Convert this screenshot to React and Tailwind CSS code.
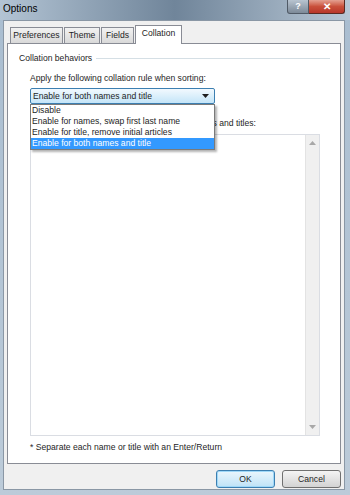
import React from 'react';

const font = { fontFamily: '"Liberation Sans", Arial, sans-serif' };

const tabs = [
  { label: 'Preferences', w: 'w-[53px]' },
  { label: 'Theme', w: 'w-[36px]' },
  { label: 'Fields', w: 'w-[33px]' },
];

const options = [
  'Disable',
  'Enable for names, swap first last name',
  'Enable for title, remove initial articles',
  'Enable for both names and title',
];

const Arrow = ({ up, className }) => (
  <svg width="7" height="4" viewBox="0 0 7 4" className={className}>
    <path d={up ? 'M0 4 L3.5 0 L7 4 Z' : 'M0 0 L7 0 L3.5 4 Z'} fill="currentColor" />
  </svg>
);

const App = () => {
  return (
    <div
      className="w-[350px] h-[495px] flex flex-col bg-gradient-to-b from-[#a9bdd0] to-[#bccbd9] text-[#1e1e1e] overflow-hidden"
      style={font}
    >
      {/* Title bar */}
      <div className="h-[20px] flex items-start justify-between bg-gradient-to-r from-[#b3c4d4] via-[#70859a] to-[#b8c7d5]">
        <span className="pl-[3px] pt-[3px] text-[10px] leading-[12px] text-black">Options</span>
        <div className="flex mr-[5px]">
          <div className="w-[22px] h-[14px] flex items-center justify-center rounded-bl-[3px] border border-t-0 border-[#505a66] bg-gradient-to-b from-[#b8c4d0] to-[#7d8a98] text-white text-[9px] font-bold leading-none">
            ?
          </div>
          <div className="w-[36px] h-[14px] flex items-center justify-center rounded-br-[3px] border border-t-0 border-l-0 border-[#5a2a22] bg-gradient-to-b from-[#e3a091] via-[#c9503b] to-[#b8362a] text-white text-[10px] font-bold leading-none">
            ✕
          </div>
        </div>
      </div>

      {/* Client area */}
      <div className="flex-1 ml-[3px] mr-[5px] mb-[5px] bg-[#f0f0f0] border border-[#8a97a5] flex flex-col">
        {/* Tabs */}
        <div className="flex items-end ml-[6px] mt-[4px] h-[18px]">
          {tabs.map((t) => (
            <div
              key={t.label}
              className={`${t.w} h-[16px] mr-[1px] border border-b-0 border-[#898c95] bg-gradient-to-b from-[#f2f2f2] to-[#d9d9d9] text-[8.6px] leading-[14px] text-center`}
            >
              {t.label}
            </div>
          ))}
          <div className="w-[47px] h-[19px] -mb-px relative z-10 border border-b-0 border-[#898c95] bg-white text-[8.6px] leading-[15px] text-center">
            Collation
          </div>
        </div>

        {/* Panel */}
        <div className="ml-[3px] mr-[3px] h-[421px] bg-white border border-[#898c95] flex flex-col">
          <div className="flex items-center mt-[8px] pl-[11px] pr-[10px] h-[12px]">
            <span className="text-[8.6px] leading-[12px] whitespace-nowrap">Collation behaviors</span>
            <div className="flex-1 ml-[4px] h-px bg-[#d5dfe5]" />
          </div>

          <div className="pl-[22px] mt-[8px] h-[12px] text-[8.6px] leading-[12px]">
            Apply the following collation rule when sorting:
          </div>

          {/* Select with opened list */}
          <div className="ml-[22px] mt-[4px] w-[185px] relative">
            <div className="h-[16px] flex items-center justify-between pl-[2px] pr-[5px] border border-[#3c7fb1] rounded-[2px] bg-gradient-to-b from-[#f2f9fe] to-[#c4e5f8] text-[8.6px]">
              <span>Enable for both names and title</span>
              <Arrow className="text-[#1e1e1e]" />
            </div>
            <div className="absolute left-0 top-full w-[185px] bg-white border border-[#7a7a7a] shadow-[2px_2px_2px_rgba(0,0,0,0.3)] z-20">
              {options.map((o, i) => (
                <div
                  key={o}
                  className={`h-[11px] pl-[1px] text-[8.6px] leading-[11px] whitespace-nowrap ${
                    i === 3 ? 'bg-[#3399ff] text-white' : ''
                  }`}
                >
                  {o}
                </div>
              ))}
            </div>
          </div>

          <div className="ml-[22px] mt-[13px] w-[226px] h-[12px] text-[8.6px] leading-[12px] text-right whitespace-nowrap">
            Do not apply the collation rule to these names and titles:
          </div>

          {/* Text box */}
          <div className="ml-[22px] mt-[5px] w-[290px] h-[302px] border border-[#dadde3] flex justify-end bg-white">
            <div className="w-[14px] h-full bg-[#f0f0f0] border-l border-[#e3e3e3] flex flex-col justify-between items-center py-[6px]">
              <Arrow up className="text-[#a8a8a8]" />
              <Arrow className="text-[#a8a8a8]" />
            </div>
          </div>

          <div className="pl-[22px] mt-[5px] h-[12px] text-[8.6px] leading-[12px]">
            * Separate each name or title with an Enter/Return
          </div>
        </div>

        {/* Buttons */}
        <div className="flex justify-end gap-[7px] mt-[6px] mr-[3px]">
          <button className="w-[59px] h-[18px] rounded-[3px] border border-[#3c7fb1] bg-gradient-to-b from-[#eaf6fd] to-[#bfe3f7] text-[8.6px] text-[#1e1e1e] shadow-[inset_0_0_0_1px_#9fd8f8]">
            OK
          </button>
          <button className="w-[59px] h-[18px] rounded-[3px] border border-[#707070] bg-gradient-to-b from-[#f4f4f4] to-[#d3d3d3] text-[8.6px] text-[#1e1e1e]">
            Cancel
          </button>
        </div>
      </div>
    </div>
  );
};

export default App;
